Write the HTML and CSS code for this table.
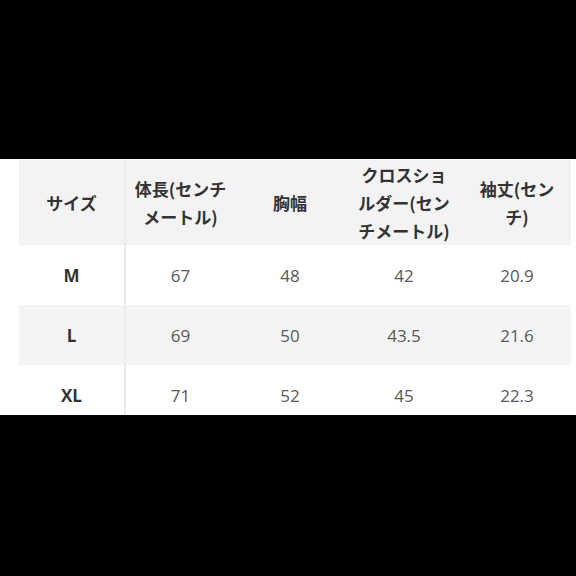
FILE: index.html
```html
<!DOCTYPE html>
<html lang="ja">
<head>
<meta charset="utf-8">
<link rel="stylesheet" href="styles.css">
</head>
<body>
<div class="panel">
  <table class="sizes">
    <colgroup>
      <col class="c1"><col class="c2"><col class="c3"><col class="c4"><col class="c5">
    </colgroup>
    <thead>
      <tr>
        <th class="first">サイズ</th>
        <th>体長(センチ<br>メートル)</th>
        <th>胸幅</th>
        <th>クロスショ<br>ルダー(セン<br>チメートル)</th>
        <th>袖丈(セン<br>チ)</th>
      </tr>
    </thead>
    <tbody>
      <tr>
        <td class="first size">M</td><td>67</td><td>48</td><td>42</td><td>20.9</td>
      </tr>
      <tr class="alt">
        <td class="first size">L</td><td>69</td><td>50</td><td>43.5</td><td>21.6</td>
      </tr>
      <tr>
        <td class="first size">XL</td><td>71</td><td>52</td><td>45</td><td>22.3</td>
      </tr>
    </tbody>
  </table>
</div>
</body>
</html>
```
FILE: styles.css
```css
html, body {
  margin: 0;
  padding: 0;
  background: #000;
}
body {
  width: 576px;
  height: 576px;
  padding-top: 159px;
  box-sizing: border-box;
}
.panel {
  background: #fff;
  height: 256px;
  overflow: hidden;
  padding: 1px 0 0 19px;
  box-sizing: border-box;
}
.sizes {
  border-collapse: collapse;
  table-layout: fixed;
  width: 552px;
}
.c1 { width: 106px; }
.c2 { width: 110px; }
.c3 { width: 110px; }
.c4 { width: 118px; }
.c5 { width: 108px; }
.sizes th {
  background: #f3f3f3;
  height: 85px;
  padding: 0;
  font-family: "Noto Sans CJK JP", "Noto Sans", sans-serif;
  font-weight: 700;
  font-size: 17px;
  line-height: 28px;
  color: #333;
  text-align: center;
  vertical-align: middle;
}
.sizes td {
  height: 60px;
  padding: 0;
  font-family: "Open Sans", "Noto Sans", sans-serif;
  font-size: 17px;
  color: #595959;
  text-align: center;
  vertical-align: middle;
}
.sizes .first {
  border-right: 2px solid #ececec;
}
.sizes td.size {
  font-weight: 700;
  color: #333;
}
.sizes tr.alt td {
  background: #f4f4f4;
}
```
